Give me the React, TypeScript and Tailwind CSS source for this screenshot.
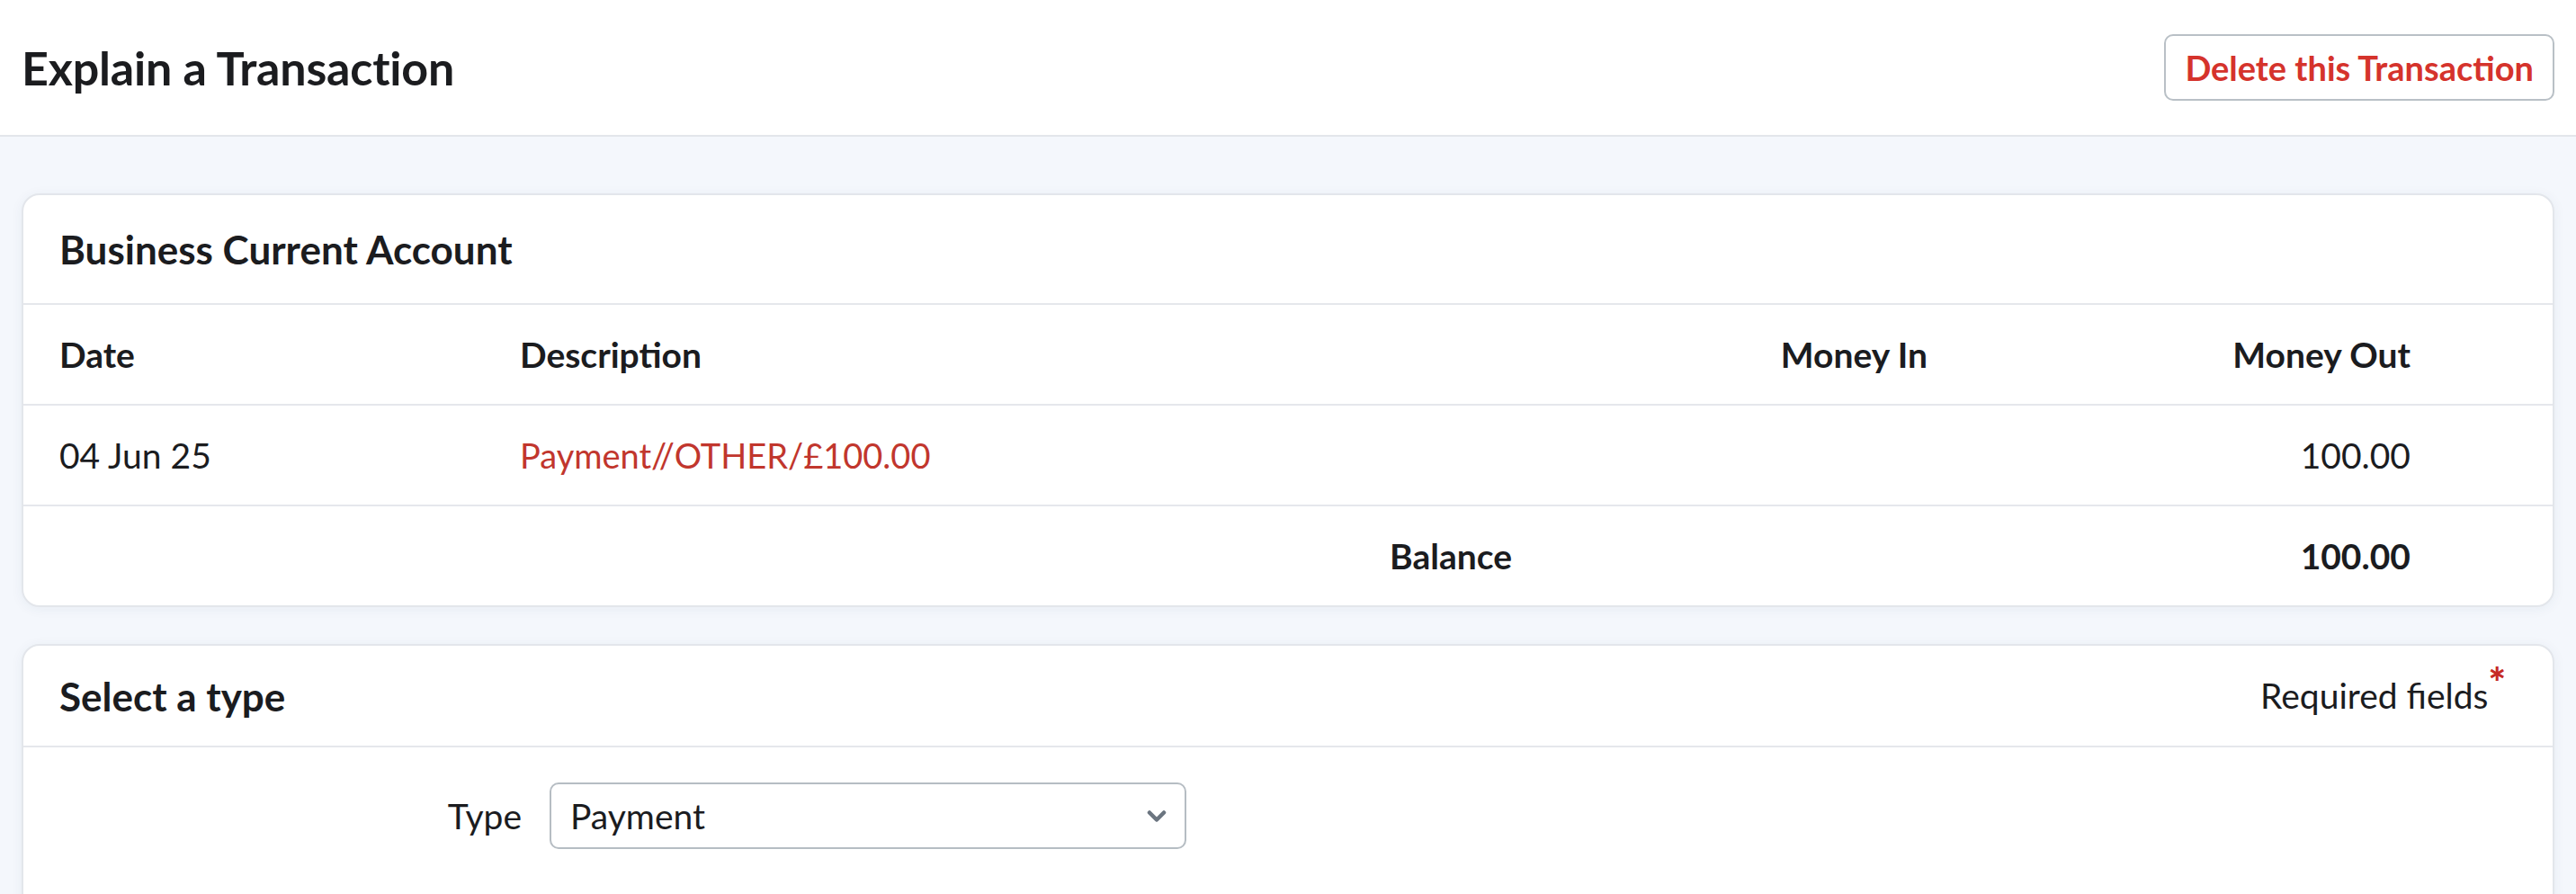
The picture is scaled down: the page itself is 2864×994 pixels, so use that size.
const font = { fontFamily: 'Lato, "Liberation Sans", sans-serif' };

const Divider = () => <div className="h-[2px] w-full bg-[#e5e7ec]" />;

const Chevron = () => (
  <svg width="22" height="15" viewBox="0 0 22 15" fill="none" className="text-[#6b7580]">
    <path d="M3 3.5 11 11.5 19 3.5" stroke="currentColor" strokeWidth="4.5" strokeLinecap="round" strokeLinejoin="round" />
  </svg>
);

export default function App() {
  return (
    <div style={font} className="flex h-[994px] w-full flex-col overflow-hidden bg-[#f4f7fc] text-[#1b1c1f]">
      {/* Page header */}
      <header className="flex h-[152px] shrink-0 items-center justify-between border-b-2 border-[#e3e6eb] bg-white px-6">
        <h1 className="text-[52px] font-bold tracking-[-0.2px]">Explain a Transaction</h1>
        <button className="flex h-[74px] items-center rounded-[10px] border-2 border-[#b9c0c6] bg-white px-[21px] text-[38px] font-bold text-[#d5332c]">
          Delete this Transaction
        </button>
      </header>

      <main className="flex flex-col gap-[41px] px-6 pt-[63px]">
        {/* Bank account card */}
        <section className="rounded-[20px] border-2 border-[#e3e6eb] bg-white shadow-[0_2px_14px_rgba(40,60,110,0.06)]">
          <div className="flex h-[120px] items-center pl-10">
            <h2 className="text-[44px] font-bold">Business Current Account</h2>
          </div>
          <Divider />
          <div className="grid h-[110px] grid-cols-[512px_1fr_462px_537px_158px] items-center pl-10 text-[39px] font-bold">
            <span>Date</span>
            <span>Description</span>
            <span className="text-right">Money In</span>
            <span className="text-right">Money Out</span>
            <span />
          </div>
          <Divider />
          <div className="grid h-[110px] grid-cols-[512px_1fr_462px_537px_158px] items-center pl-10 text-[39px]">
            <span>04 Jun 25</span>
            <a className="text-[38px] text-[#c1362d]">Payment//OTHER/£100.00</a>
            <span />
            <span className="text-right">100.00</span>
            <span />
          </div>
          <Divider />
          <div className="grid h-[110px] grid-cols-[512px_1fr_462px_537px_158px] items-center pl-10 text-[39px] font-bold">
            <span />
            <span className="text-right">Balance</span>
            <span />
            <span className="text-right">100.00</span>
            <span />
          </div>
        </section>

        {/* Type selection card */}
        <section className="rounded-[20px] border-2 border-[#e3e6eb] bg-white pb-[120px] shadow-[0_2px_14px_rgba(40,60,110,0.06)]">
          <div className="flex h-[111px] items-center justify-between pl-10 pr-[52px]">
            <h2 className="text-[44px] font-bold">Select a type</h2>
            <p className="flex items-start text-[39px]">
              Required fields
              <span className="-mt-[8px] text-[46px] font-black leading-none text-[#c62a24]">*</span>
            </p>
          </div>
          <Divider />
          <div className="flex items-center pl-10 pt-[39px]">
            <label className="w-[514px] text-right text-[39px]">Type</label>
            <div className="ml-[31px] flex h-[74px] w-[708px] items-center justify-between rounded-[10px] border-2 border-[#b6bdc3] pl-[21px] pr-[20px]">
              <span className="text-[39px]">Payment</span>
              <Chevron />
            </div>
          </div>
        </section>
      </main>
    </div>
  );
}
